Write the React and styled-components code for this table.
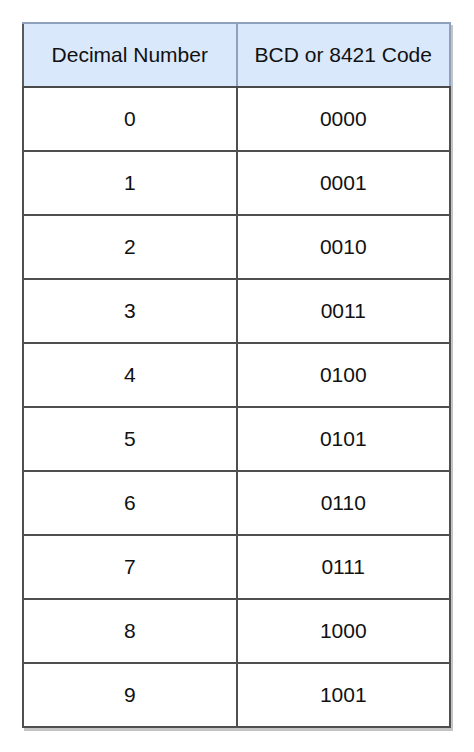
import React from 'react';
import styled, {createGlobalStyle} from "styled-components";

const GlobalStyle = createGlobalStyle`
  html, body {
    margin: 0;
    padding: 0;
    background: #ffffff;
  }
  body {
    font-family: "Liberation Sans", Arial, sans-serif;
  }
`;

const Page = styled.div`
  padding: 22px 0 0 22px;
`;

const Frame = styled.div`
  display: inline-block;
  box-shadow: 2px 3px 0 #c4c4c4;
`;

const Table = styled.table`
  border-collapse: collapse;
  width: 429px;
  table-layout: fixed;
  font-family: "Liberation Sans", Arial, sans-serif;
  font-size: 21px;
  color: #111;
`;

const HeadCell = styled.th`
  height: 62px;
  padding: 0;
  font-weight: normal;
  background: #dae8fc;
  border: 2px solid #8ea0bb;
  border-bottom-color: #4a4a4a;
  text-align: center;
  vertical-align: middle;
  &:first-child {
    border-left-color: #5a5a5a;
  }
`;

const Cell = styled.td`
  height: 62px;
  padding: 0;
  border: 2px solid #4f4f4f;
  text-align: center;
  vertical-align: middle;
`;

const rows = [
  ["0", "0000"],
  ["1", "0001"],
  ["2", "0010"],
  ["3", "0011"],
  ["4", "0100"],
  ["5", "0101"],
  ["6", "0110"],
  ["7", "0111"],
  ["8", "1000"],
  ["9", "1001"],
];

export default function App() {
  return (
    <Page>
      <GlobalStyle />
      <Frame>
        <Table>
          <thead>
            <tr>
              <HeadCell>Decimal Number</HeadCell>
              <HeadCell>BCD or 8421 Code</HeadCell>
            </tr>
          </thead>
          <tbody>
            {rows.map(([dec, bcd]) => (
              <tr key={dec}>
                <Cell>{dec}</Cell>
                <Cell>{bcd}</Cell>
              </tr>
            ))}
          </tbody>
        </Table>
      </Frame>
    </Page>
  );
}
